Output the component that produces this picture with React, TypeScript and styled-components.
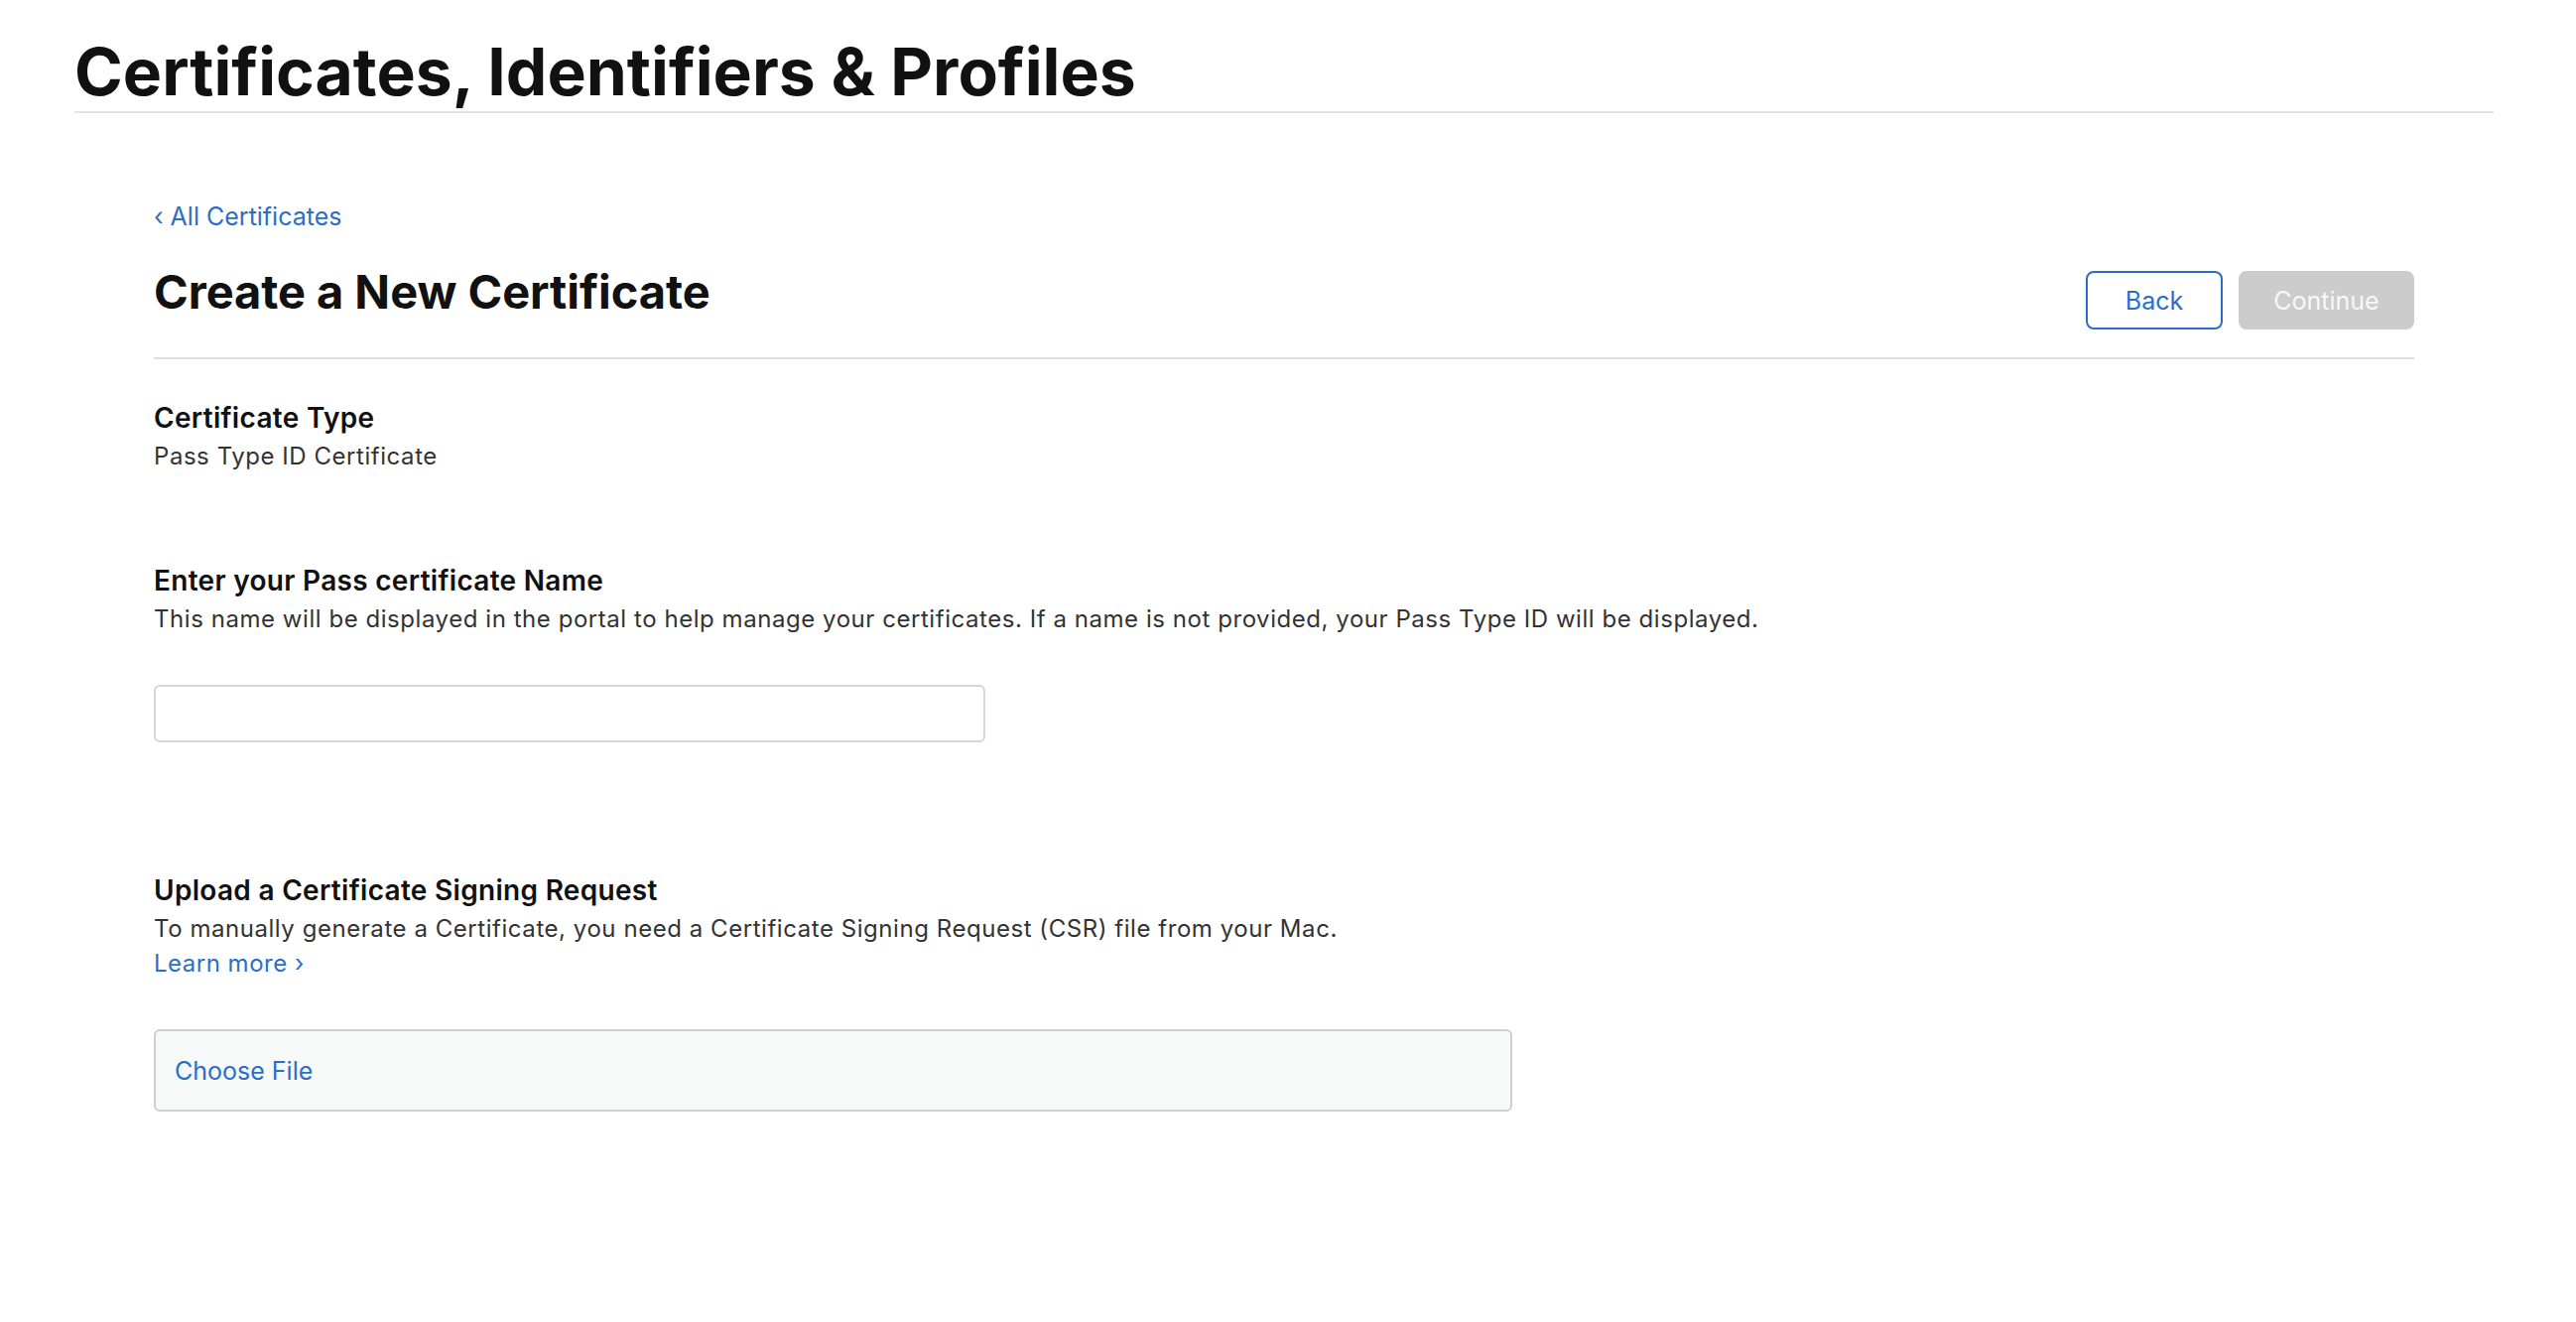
import React from "react";
import styled, { createGlobalStyle } from "styled-components";

const GlobalStyle = createGlobalStyle`
  html, body {
    margin: 0;
    padding: 0;
    background: #ffffff;
  }
  body {
    font-family: Inter, "Noto Sans", "Liberation Sans", sans-serif;
    color: #111111;
    -webkit-font-smoothing: antialiased;
  }
  * { box-sizing: border-box; }
`;

const Page = styled.div`
  padding: 0 83px 0 75px;
`;

const Header = styled.header`
  padding-top: 33px;
  border-bottom: 2px solid #e3e3e3;
`;

const PageTitle = styled.h1`
  margin: 0;
  font-size: 66px;
  line-height: 79px;
  font-weight: 700;
  letter-spacing: 0;
  color: #111111;
`;

const Main = styled.main`
  padding: 0 80px;
`;

const Breadcrumb = styled.a`
  display: block;
  margin-top: 86px;
  font-size: 25px;
  line-height: 36px;
  color: #2a6ec8;
  text-decoration: none;
  cursor: pointer;
`;

const Chevron = styled.span`
  display: inline-block;
  margin: 0 7px 0 0;
`;

const TitleRow = styled.div`
  display: flex;
  justify-content: space-between;
  align-items: flex-start;
  margin-top: 30px;
  padding-bottom: 28px;
  border-bottom: 2px solid #dcdcdc;
`;

const FormTitle = styled.h2`
  margin: 0;
  font-size: 47px;
  line-height: 56px;
  font-weight: 700;
  letter-spacing: -0.05px;
  color: #111111;
`;

const ButtonGroup = styled.div`
  display: flex;
  gap: 16px;
  margin-top: 7px;
`;

const Button = styled.button<{ $variant: "outline" | "disabled" }>`
  height: 59px;
  min-width: ${(p) => (p.$variant === "outline" ? "138px" : "177px")};
  padding: 0 24px;
  border-radius: 8px;
  font-family: inherit;
  font-size: 25px;
  font-weight: 400;
  cursor: ${(p) => (p.$variant === "outline" ? "pointer" : "default")};
  border: 2px solid ${(p) => (p.$variant === "outline" ? "#2a6ec8" : "#cccccc")};
  background: ${(p) => (p.$variant === "outline" ? "#ffffff" : "#cccccc")};
  color: ${(p) => (p.$variant === "outline" ? "#2a6ec8" : "#f7f7f7")};
`;

const Section = styled.section<{ $gap: number }>`
  margin-top: ${(p) => p.$gap}px;
`;

const SectionTitle = styled.h3`
  margin: 0;
  font-size: 28px;
  line-height: 38px;
  font-weight: 600;
  letter-spacing: 0.3px;
  color: #111111;
`;

const SectionText = styled.p`
  margin: 1px 0 0;
  font-size: 24px;
  line-height: 37px;
  font-weight: 400;
  letter-spacing: 0.55px;
  color: #333333;
`;

const InlineLink = styled.a`
  display: block;
  margin-top: -2px;
  font-size: 24px;
  line-height: 37px;
  letter-spacing: 0.5px;
  color: #2a6ec8;
  text-decoration: none;
  cursor: pointer;
`;

const TextInput = styled.input`
  display: block;
  margin-top: 48px;
  width: 838px;
  height: 58px;
  border: 2px solid #d6d6d6;
  border-radius: 6px;
  padding: 0 16px;
  font-family: inherit;
  font-size: 24px;
  background: #ffffff;
  outline: none;
`;

const FileBox = styled.label`
  display: flex;
  align-items: center;
  margin-top: 48px;
  width: 1369px;
  height: 83px;
  padding: 0 19px;
  border: 2px solid #cfcfcf;
  border-radius: 6px;
  background: #f7f8f8;
  cursor: pointer;
`;

const FileText = styled.span`
  font-size: 25px;
  color: #2a6ec8;
`;

const HiddenFile = styled.input`
  display: none;
`;

export default function App() {
  return (
    <>
      <GlobalStyle />
      <Page>
        <Header>
          <PageTitle>Certificates, Identifiers &amp; Profiles</PageTitle>
        </Header>
        <Main>
          <Breadcrumb>
            <Chevron>‹</Chevron>All Certificates
          </Breadcrumb>
          <TitleRow>
            <FormTitle>Create a New Certificate</FormTitle>
            <ButtonGroup>
              <Button $variant="outline">Back</Button>
              <Button $variant="disabled" disabled>
                Continue
              </Button>
            </ButtonGroup>
          </TitleRow>

          <Section $gap={40}>
            <SectionTitle>Certificate Type</SectionTitle>
            <SectionText>Pass Type ID Certificate</SectionText>
          </Section>

          <Section $gap={88}>
            <SectionTitle>Enter your Pass certificate Name</SectionTitle>
            <SectionText>
              This name will be displayed in the portal to help manage your certificates. If a name is
              not provided, your Pass Type ID will be displayed.
            </SectionText>
            <TextInput type="text" />
          </Section>

          <Section $gap={130}>
            <SectionTitle>Upload a Certificate Signing Request</SectionTitle>
            <SectionText>
              To manually generate a Certificate, you need a Certificate Signing Request (CSR) file
              from your Mac.
            </SectionText>
            <InlineLink>Learn more ›</InlineLink>
            <FileBox>
              <HiddenFile type="file" />
              <FileText>Choose File</FileText>
            </FileBox>
          </Section>
        </Main>
      </Page>
    </>
  );
}
